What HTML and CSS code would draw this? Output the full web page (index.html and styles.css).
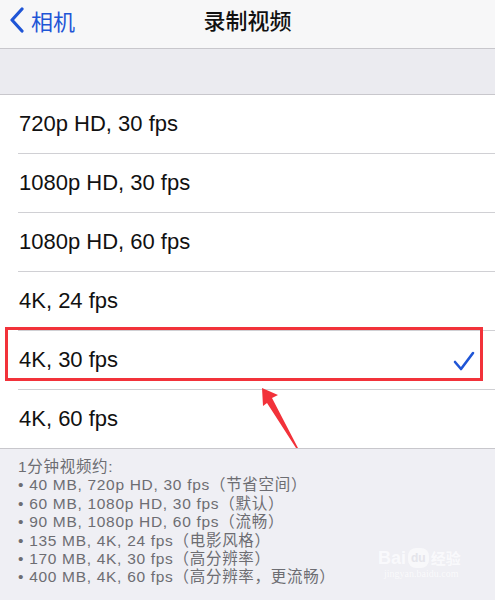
FILE: index.html
```html
<!DOCTYPE html>
<html lang="zh-CN">
<head>
<meta charset="utf-8">
<title>录制视频</title>
<link rel="stylesheet" href="styles.css">
</head>
<body>
<div class="screen">
  <header class="nav">
    <a class="back">
      <svg class="chev" width="16" height="26" viewBox="0 0 16 26"><path d="M13 2 L3 13 L13 24" fill="none" stroke="#1f55d6" stroke-width="3.2" stroke-linecap="round" stroke-linejoin="round"/></svg>
      <span>相机</span>
    </a>
    <h1 class="title">录制视频</h1>
  </header>
  <div class="band"></div>
  <ul class="list">
    <li class="row"><span>720p HD, 30 fps</span></li>
    <li class="row"><span>1080p HD, 30 fps</span></li>
    <li class="row"><span>1080p HD, 60 fps</span></li>
    <li class="row"><span>4K, 24 fps</span></li>
    <li class="row selected"><span>4K, 30 fps</span>
      <svg class="check" width="22" height="20" viewBox="0 0 22 20"><path d="M2 11 L8 18 L20 2" fill="none" stroke="#1f55d6" stroke-width="2.6" stroke-linecap="round" stroke-linejoin="round"/></svg>
      <div class="highlight"></div>
    </li>
    <li class="row last"><span>4K, 60 fps</span></li>
  </ul>
  <div class="footer">
    <p>1分钟视频约:</p>
    <p>• 40 MB, 720p HD, 30 fps（节省空间）</p>
    <p>• 60 MB, 1080p HD, 30 fps（默认）</p>
    <p>• 90 MB, 1080p HD, 60 fps（流畅）</p>
    <p>• 135 MB, 4K, 24 fps（电影风格）</p>
    <p>• 170 MB, 4K, 30 fps（高分辨率）</p>
    <p>• 400 MB, 4K, 60 fps（高分辨率，更流畅）</p>
    <div class="watermark">
      <div class="wm-logo"><span class="wm-bai">Bai</span><span class="wm-du">du</span><span class="wm-jy">经验</span></div>
      <div class="wm-url">jingyan.baidu.com</div>
    </div>
  </div>
  <svg class="arrow" width="495" height="600" viewBox="0 0 495 600">
    <polygon points="262,388 278,395 272,398 298,448 296,448 267,403 263,406" fill="#f2323a"/>
  </svg>
</div>
</body>
</html>
```

FILE: styles.css
```css
* { box-sizing: border-box; margin: 0; padding: 0; }
html, body { width: 495px; height: 600px; overflow: hidden; }
body {
  font-family: "Liberation Sans", "Noto Sans CJK SC", sans-serif;
  background: #efeff4;
  color: #111;
}
.screen { position: relative; width: 495px; height: 600px; }
.nav {
  position: relative;
  height: 49px;
  background: #f7f7f8;
  border-bottom: 1px solid #c8c7cc;
  display: flex;
  align-items: center;
}
.back {
  display: flex;
  align-items: center;
  gap: 6px;
  padding-left: 9px;
  color: #1f55d6;
  font-family: "Noto Sans CJK SC", sans-serif;
  font-size: 22px;
  line-height: 1;
  padding-bottom: 8px;
}
.title {
  position: absolute;
  left: 0; right: 0; top: 0;
  height: 48px;
  display: flex;
  justify-content: center;
  align-items: center;
  padding-bottom: 10px;
  font-family: "Noto Sans CJK SC", sans-serif;
  font-size: 22px;
  font-weight: 500;
  color: #111;
}
.band { height: 45px; background: #ebebf0; }
.list {
  list-style: none;
  background: #fff;
  border-top: 1px solid #c8c7cc;
  border-bottom: 1px solid #c8c7cc;
  padding-left: 18px;
}
.row {
  position: relative;
  height: 59px;
  display: flex;
  align-items: center;
  justify-content: space-between;
  border-bottom: 1px solid #d0d0d4;
  padding-left: 1px;
  padding-right: 20px;
  font-size: 22px;
  color: #111;
}
.row.last { border-bottom: none; height: 58px; }
.check { margin-top: 2px; }
.highlight {
  position: absolute;
  left: -13px;
  top: -4px;
  width: 478px;
  height: 54px;
  border: 3px solid #f2323a;
}
.footer {
  position: relative;
  padding: 9px 18px 0;
  font-family: "Liberation Sans", "Noto Sans CJK SC", sans-serif;
  font-size: 15.5px;
  letter-spacing: 0.7px;
  line-height: 18.4px;
  color: #6d6d72;
  height: 152px;
}
.watermark {
  position: absolute;
  left: 378px;
  top: 99px;
  color: #fbfbfd;
  opacity: 0.9;
  letter-spacing: 0;
}
.wm-logo { display: flex; align-items: center; font-weight: 700; font-size: 18px; line-height: 20px; }
.wm-du {
  display: inline-block;
  background: #f9f9fb;
  color: #e4e4ea;
  border-radius: 8px;
  font-size: 12px;
  padding: 0 3px;
  margin: 0 2px;
}
.wm-jy { font-family: "Noto Sans CJK SC", sans-serif; font-size: 15px; }
.wm-url { font-family: "Liberation Serif", serif; font-size: 10px; line-height: 12px; margin-left: 6px; }
.arrow { position: absolute; left: 0; top: 0; pointer-events: none; }
```
